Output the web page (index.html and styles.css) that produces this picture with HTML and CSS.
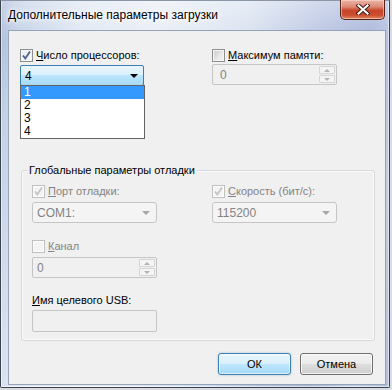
FILE: index.html
```html
<!DOCTYPE html>
<html lang="ru">
<head>
<meta charset="utf-8">
<title>Дополнительные параметры загрузки</title>
<link rel="stylesheet" href="styles.css">
</head>
<body>
<div class="window">
  <div class="titlebar">
    <span class="title">Дополнительные параметры загрузки</span>
    <div class="close">
      <svg width="14" height="11" viewBox="0 0 14 11"><path d="M2.5 1.5 L11.5 9.5 M11.5 1.5 L2.5 9.5" stroke="#3a1410" stroke-width="4" stroke-linecap="square" fill="none"/><path d="M2.5 1.5 L11.5 9.5 M11.5 1.5 L2.5 9.5" stroke="#fff" stroke-width="2.2" stroke-linecap="square" fill="none"/></svg>
    </div>
  </div>
  <div class="client">
    <div class="top-row">
      <div class="field">
        <label class="check">
          <span class="box box-checked"><svg width="11" height="11" viewBox="0 0 11 11"><path d="M2 5.5 L4.3 8.5 L9 1.5" stroke="#4a5f8a" stroke-width="1.8" fill="none"/></svg></span>
          <span><u>Ч</u>исло процессоров:</span>
        </label>
        <div class="combo combo-open">
          <span>4</span>
          <span class="arrow arrow-dark"></span>
        </div>
        <ul class="dropdown">
          <li class="item item-selected">1</li>
          <li class="item">2</li>
          <li class="item">3</li>
          <li class="item">4</li>
        </ul>
      </div>
      <div class="field">
        <label class="check">
          <span class="box box-empty"></span>
          <span><u>М</u>аксимум памяти:</span>
        </label>
        <div class="spin spin-top">
          <span class="spin-value">0</span>
          <span class="spin-buttons">
            <span class="spin-btn"><span class="tri-up"></span></span>
            <span class="spin-btn"><span class="tri-down"></span></span>
          </span>
        </div>
      </div>
    </div>

    <div class="group">
      <span class="legend">Глобальные параметры отладки</span>
      <div class="group-grid">
        <div class="field">
          <label class="check disabled">
            <span class="box box-disabled"><svg width="11" height="11" viewBox="0 0 11 11"><path d="M2 5.5 L4.3 8.5 L9 1.5" stroke="#c4c4c4" stroke-width="1.8" fill="none"/></svg></span>
            <span><u>П</u>орт отладки:</span>
          </label>
          <div class="combo combo-disabled">
            <span>COM1:</span>
            <span class="arrow arrow-light"></span>
          </div>
        </div>
        <div class="field">
          <label class="check disabled">
            <span class="box box-disabled"><svg width="11" height="11" viewBox="0 0 11 11"><path d="M2 5.5 L4.3 8.5 L9 1.5" stroke="#c4c4c4" stroke-width="1.8" fill="none"/></svg></span>
            <span><u>С</u>корость (бит/с):</span>
          </label>
          <div class="combo combo-disabled">
            <span>115200</span>
            <span class="arrow arrow-light"></span>
          </div>
        </div>
        <div class="field field-channel">
          <label class="check disabled">
            <span class="box box-disabled"></span>
            <span><u>К</u>анал</span>
          </label>
          <div class="spin spin-group">
            <span class="spin-value">0</span>
            <span class="spin-buttons">
              <span class="spin-btn"><span class="tri-up"></span></span>
              <span class="spin-btn"><span class="tri-down"></span></span>
            </span>
          </div>
        </div>
        <div class="field field-usb">
          <span class="label"><u>И</u>мя целевого USB:</span>
          <div class="textbox"></div>
        </div>
      </div>
    </div>

    <div class="buttons">
      <button class="btn btn-default">ОК</button>
      <button class="btn">Отмена</button>
    </div>
  </div>
</div>
</body>
</html>
```
FILE: styles.css
```css
* { box-sizing: border-box; }

html, body {
  margin: 0;
  padding: 0;
}

body {
  width: 392px;
  height: 390px;
  overflow: hidden;
  background: #d9dde3;
  font-family: "Liberation Sans", Arial, sans-serif;
  font-size: 11px;
  color: #000;
}

.window {
  width: 390px;
  height: 388px;
  border: 1px solid #3d434c;
  border-top-color: #8a95a6;
  border-radius: 0 0 2px 2px;
  padding: 0 3px 2px 7px;
  display: flex;
  flex-direction: column;
  background:
    linear-gradient(to bottom, rgba(255,255,255,0.35), rgba(255,255,255,0) 40px),
    linear-gradient(100deg, #a9b9d6 0%, #c3d1e7 5%, #dfe7f2 18%, #e9eef6 35%, #d9e2f0 55%, #b8c3e2 72%, #a9b6db 82%, #c3cfe6 92%, #b2bfdd 100%);
  box-shadow: inset 1px 0 0 rgba(255,255,255,0.5), inset -1px 0 0 rgba(255,255,255,0.5), inset 0 -1px 0 rgba(255,255,255,0.5);
}

.titlebar {
  height: 29px;
  display: flex;
  align-items: flex-start;
  flex-shrink: 0;
}

.title {
  padding-top: 6px;
  font-size: 12px;
  line-height: 17px;
  color: #000;
  text-shadow: 0 0 6px #fff, 0 0 3px #fff, 0 0 10px #fff;
}

.close {
  margin-left: auto;
  margin-right: 1px;
  margin-top: -1px;
  width: 45px;
  height: 20px;
  border: 1px solid #55241b;
  border-top: none;
  border-radius: 0 0 5px 5px;
  background: linear-gradient(to bottom, #eab4a6 0%, #dd8a76 35%, #c7462a 55%, #cc4d2f 80%, #e08b66 100%);
  box-shadow: inset 0 0 0 1px rgba(255,220,210,0.55);
  display: flex;
  align-items: center;
  justify-content: center;
}

.client {
  flex: 1;
  background: #f0f0f0;
  border: 1px solid #96a3b6;
  display: flex;
  flex-direction: column;
  position: relative;
}

/* top row */
.top-row {
  display: grid;
  grid-template-columns: 125px 125px;
  column-gap: 67px;
  padding: 16px 0 0 11px;
}

.field {
  display: flex;
  flex-direction: column;
  position: relative;
}

.check {
  display: flex;
  align-items: center;
  gap: 3px;
  height: 16px;
  line-height: 16px;
  white-space: nowrap;
}

.check.disabled { color: #838383; }

.box {
  width: 13px;
  height: 13px;
  flex-shrink: 0;
  border: 1px solid #8e8f8f;
  background: linear-gradient(135deg, #dcdcdc 0%, #f5f5f5 100%);
  box-shadow: inset 0 0 0 1px #f4f4f4;
  display: flex;
  align-items: center;
  justify-content: center;
}

.box-checked {
  background: linear-gradient(135deg, #e8ebf0 0%, #fbfbfb 100%);
}

.box-empty {
  background: linear-gradient(135deg, #c9c9c9 0%, #e9e9e9 60%, #f4f4f4 100%);
}

.box-disabled {
  border-color: #c0c0c0;
  background: #f4f4f4;
  box-shadow: inset 0 0 0 1px #fdfdfd;
}

.box svg { display: block; }

.combo {
  height: 21px;
  margin-top: 2px;
  border: 1px solid #acacac;
  border-radius: 2px;
  display: flex;
  align-items: center;
  justify-content: space-between;
  padding: 0 5px 0 4px;
  line-height: 16px;
}

.combo-open {
  width: 124px;
  border-color: #3c7fb1;
  background: linear-gradient(to bottom, #eaf6fd 0%, #d9f0fc 45%, #bee6fd 50%, #a7d9f5 100%);
  color: #000;
  font-size: 12px;
}

.combo-disabled {
  margin-top: 3px;
  border-color: #c5c5c5;
  border-radius: 3px;
  background: #f4f4f4;
  color: #838383;
  font-size: 12px;
}

.arrow {
  width: 0;
  height: 0;
  border-left: 4px solid transparent;
  border-right: 4px solid transparent;
}

.arrow-dark { border-top: 4px solid #000; margin-right: 0; }
.arrow-light { border-top: 4px solid #a6a6a6; margin-right: 1px; }

.dropdown {
  list-style: none;
  margin: 0;
  padding: 0;
  position: absolute;
  left: 0;
  top: 38px;
  width: 125px;
  background: #fff;
  border: 1px solid #646464;
  z-index: 2;
  font-size: 12px;
}

.item {
  height: 13px;
  line-height: 13px;
  padding-left: 3px;
  color: #000;
}

.item-selected {
  background: #3399ff;
  color: #fff;
}

.spin {
  height: 21px;
  border: 1px solid #c5c5c5;
  border-radius: 2px;
  background: #f0f0f0;
  display: flex;
  align-items: center;
  justify-content: space-between;
  color: #838383;
  padding: 0 1px 0 7px;
  font-size: 12px;
}

.spin-top { margin-top: 1px; }
.spin-group { margin-top: 3px; padding-left: 4px; }

.spin-value { line-height: 16px; }

.spin-buttons {
  display: flex;
  flex-direction: column;
  gap: 1px;
  width: 16px;
  height: 17px;
}

.spin-btn {
  flex: 1;
  border: 1px solid #d4d4d4;
  border-radius: 1px;
  background: #f4f4f4;
  display: flex;
  align-items: center;
  justify-content: center;
}

.tri-up, .tri-down {
  width: 0;
  height: 0;
  border-left: 3px solid transparent;
  border-right: 3px solid transparent;
}
.tri-up { border-bottom: 3px solid #b4b4b4; }
.tri-down { border-top: 3px solid #b4b4b4; }

/* group box */
.group {
  margin: 84px 10px 0 12px;
  border: 1px solid #d5d9de;
  border-radius: 3px;
  box-shadow: inset 0 0 0 1px #fbfbfb;
  display: flex;
  flex-direction: column;
  align-items: flex-start;
}

.legend {
  margin: -8px 0 0 5px;
  padding: 0 2px;
  background: #f0f0f0;
  line-height: 15px;
  white-space: nowrap;
}

.group-grid {
  display: grid;
  grid-template-columns: 125px 125px;
  column-gap: 55px;
  padding: 5px 0 8px 10px;
}

.field-channel {
  margin-top: 15px;
  grid-column: 1;
}

.field-usb {
  margin-top: 14px;
  grid-column: 1;
}

.label { line-height: 16px; white-space: nowrap; }

.textbox {
  margin-top: 2px;
  height: 22px;
  border: 1px solid #c5c5c5;
  border-radius: 2px;
  background: #f0f0f0;
}

/* buttons */
.buttons {
  display: flex;
  justify-content: flex-end;
  gap: 9px;
  padding: 12px 12px 0 0;
}

.btn {
  width: 73px;
  height: 22px;
  font-family: inherit;
  font-size: 11px;
  color: #000;
  border: 1px solid #707070;
  border-radius: 3px;
  padding: 0;
  background: linear-gradient(to bottom, #f2f2f2 0%, #ebebeb 48%, #dddddd 52%, #cfcfcf 100%);
  box-shadow: inset 0 0 0 1px rgba(255,255,255,0.7);
}

.btn-default {
  border-color: #3c7fb1;
  background: linear-gradient(to bottom, #eaf6fd 0%, #d9f0fc 48%, #bee6fd 52%, #a7d9f5 100%);
  box-shadow: inset 0 0 0 1px rgba(255,255,255,0.6), 0 0 2px rgba(60,127,177,0.5);
}
```
